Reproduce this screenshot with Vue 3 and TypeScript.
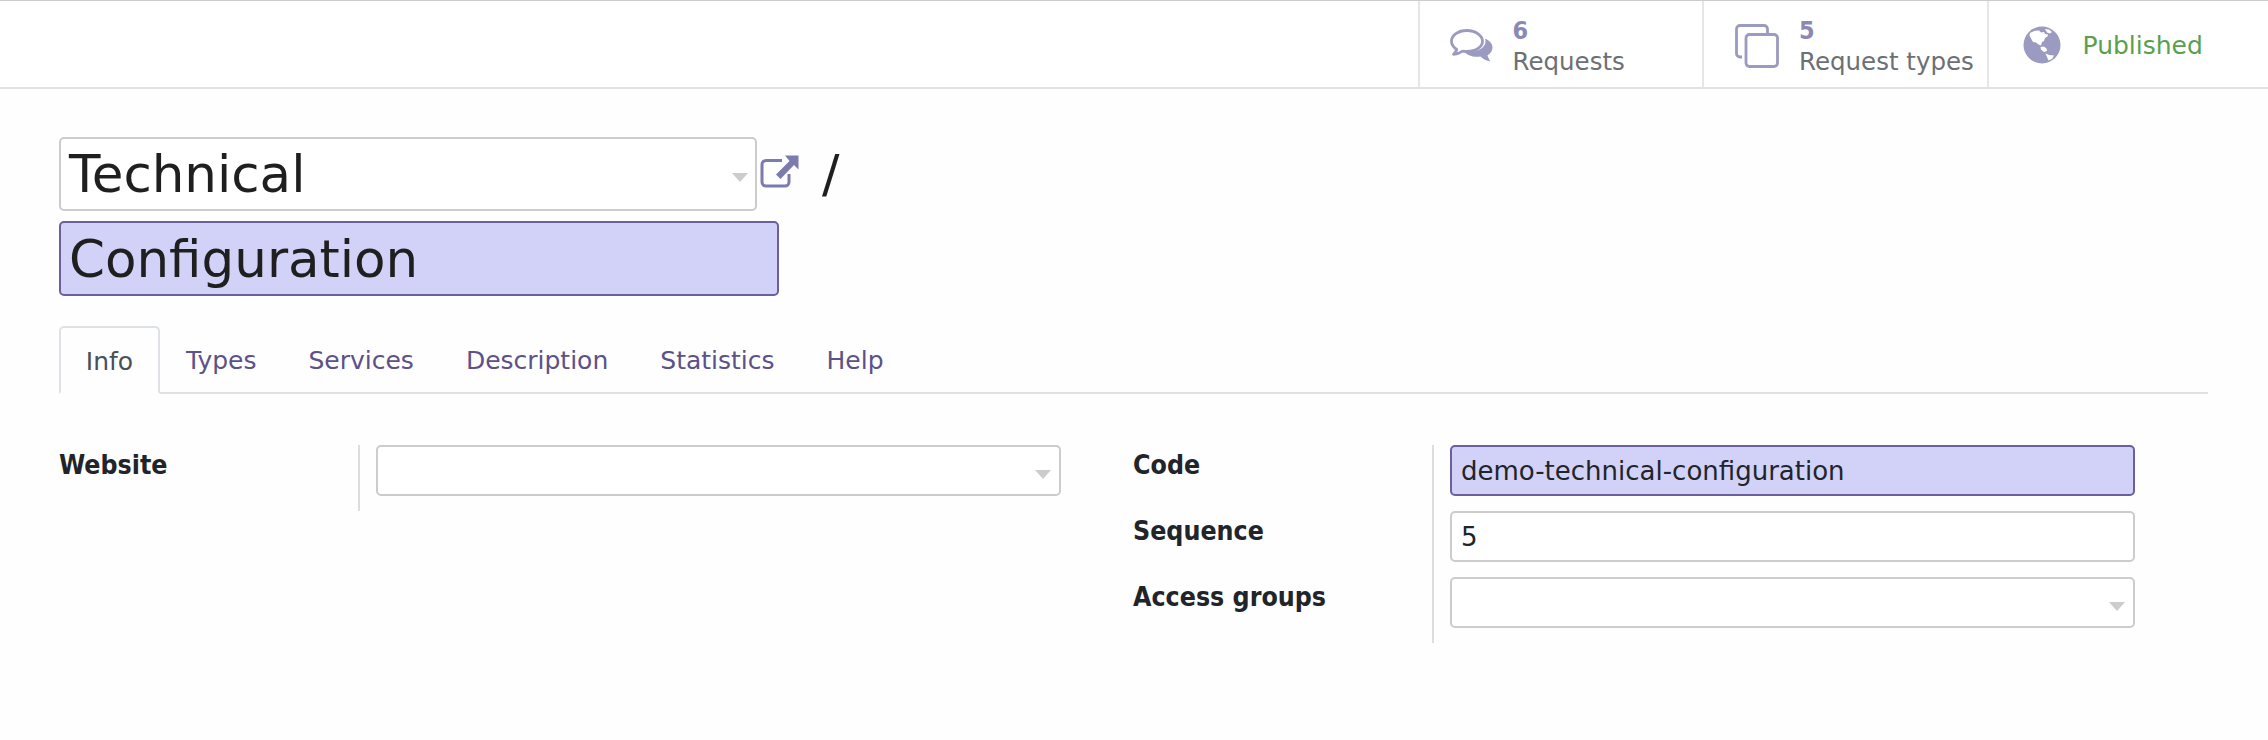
<script setup lang="ts">
interface Stat { value: string; label: string; icon: string }
const stats: Stat[] = [
  { value: '6', label: 'Requests', icon: 'comments' },
  { value: '5', label: 'Request types', icon: 'files' },
]
const tabs: string[] = ['Types', 'Services', 'Description', 'Statistics', 'Help']
</script>

<template>
  <div class="page">
    <div class="buttonbar">
      <div v-for="s in stats" :key="s.label" class="statbtn">
        <svg v-if="s.icon === 'comments'" class="ic-comments" viewBox="0 0 43 34" width="43" height="34">
          <path d="M17 1.500C8 1.500 1.500 6.400 1.500 12.200c0 3.300 2 6.200 5.300 8.200-.5 2-1.500 3.400-3.300 5 3.500-.3 6.500-1.500 9.200-3.300 1.400.2 2.900.3 4.300.3 9 0 15.500-4.700 15.500-10.200S26 1.500 17 1.500z" fill="none" stroke="#9b9ac0" stroke-width="2.800" stroke-linejoin="round"/>
          <path d="M35 9.500c4.500 2 7.500 5 7.500 9 0 3.300-2 6-5 7.800.4 2 1.500 4.200 3 6.200-4-.5-7.500-2.500-10-5-3.500.8-8 .3-12-1.500-2-1-3-1.800-4-3 8 .5 15-1 19-5.500 2-2.300 2.500-5 1.500-8.500z" fill="#9b9ac0"/>
        </svg>
        <svg v-else class="ic-files" viewBox="0 0 44 44" width="44" height="44">
          <path d="M7 33H5a3.500 3.500 0 0 1-3.500-3.500V5A3.500 3.500 0 0 1 5 1.500h24A3.500 3.500 0 0 1 32.500 5v4" fill="none" stroke="#9b9ac0" stroke-width="2.800"/>
          <rect x="11" y="10.500" width="31.500" height="32" rx="3.500" fill="none" stroke="#9b9ac0" stroke-width="2.800"/>
        </svg>
        <div class="stat-text">
          <div class="stat-value">{{ s.value }}</div>
          <div class="stat-label">{{ s.label }}</div>
        </div>
      </div>
      <div class="statbtn last">
        <svg class="ic-globe" viewBox="0 0 38 38" width="38" height="38">
          <circle cx="19" cy="19" r="18.500" fill="#9b9ac0"/>
          <path d="M7 7c3-2 6-2.500 9-2.500l2 2 3-.5 1 2 3 .5-.5 2-2.500 1.500-1 3-2 1-1 3.500-2.500-1-2.500-2-3-.5-2-3.500-1.500-3z" fill="#fff"/>
          <path d="M22 3l4 .5 3 2.500-2 1.500-3-1zM17.500 21l3.500-.5 2.500 2 .5 2.500-3 1-3-2.500z" fill="#fff"/>
          <path d="M22.500 27.500l4 1.500 4.500.5-2 3.500-3.500 1.500-1.500-3.500z" fill="#fff"/>
        </svg>
        <span class="published">Published</span>
      </div>
    </div>

    <div class="sheet">
      <div class="title">
        <div class="title-row">
          <div class="field title-select">
            <span>Technical</span>
            <i class="caret"></i>
          </div>
          <svg class="ic-link" viewBox="0 0 40 33" width="40" height="33">
            <path d="M22 5.500H6a4 4 0 0 0-4 4v17.500a4 4 0 0 0 4 4h19a4 4 0 0 0 4-4v-8" fill="none" stroke="#7c7bad" stroke-width="3"/>
            <path d="M25 .5h13.500v14l-4.500-4.500L20.500 24 16 19.500 29.500 6z" fill="#7c7bad"/>
          </svg>
          <span class="slash">/</span>
        </div>
        <div class="field title-input req"><span>Configuration</span></div>
      </div>

      <div class="tabs">
        <div class="tab active">Info</div>
        <div v-for="t in tabs" :key="t" class="tab">{{ t }}</div>
      </div>

      <div class="groups">
        <div class="group">
          <div class="row">
            <div class="label">Website</div>
            <div class="cell">
              <div class="field input"><i class="caret small"></i></div>
            </div>
          </div>
        </div>
        <div class="group">
          <div class="row">
            <div class="label">Code</div>
            <div class="cell">
              <div class="field input req"><span>demo-technical-configuration</span></div>
            </div>
          </div>
          <div class="row">
            <div class="label">Sequence</div>
            <div class="cell">
              <div class="field input"><span>5</span></div>
            </div>
          </div>
          <div class="row">
            <div class="label">Access groups</div>
            <div class="cell">
              <div class="field input"><i class="caret small"></i></div>
            </div>
          </div>
        </div>
      </div>
    </div>
  </div>
</template>

<style>
html, body { margin: 0; background: #fff; }
</style>

<style scoped>
.page {
  width: 2268px;
  height: 740px;
  background: #fefefe;
  font-family: "DejaVu Sans", sans-serif;
  color: #212529;
  overflow: hidden;
}
.buttonbar {
  height: 86px;
  border-top: 1px solid #ccc;
  border-bottom: 2px solid #e0e2e6;
  display: flex;
  justify-content: flex-end;
  background: #fff;
}
.statbtn {
  width: 284.500px;
  box-sizing: border-box;
  border-left: 2px solid #e6e6e6;
  display: flex;
  align-items: center;
  padding-left: 30px;
  padding-top: 3px;
}
.statbtn:nth-child(2) { padding-left: 31px; }
.statbtn.last { width: 281.500px; padding-left: 34px; padding-top: 2px; }
.stat-text { margin-left: 20px; }
.stat-value {
  font-size: 25px;
  line-height: 31px;
  font-weight: 700;
  font-stretch: condensed;
  color: #8a89b5;
}
.stat-label {
  font-size: 24.500px;
  line-height: 31px;
  color: #6c6f74;
  white-space: nowrap;
}
.published {
  margin-left: 22px;
  font-size: 25px;
  color: #5a9f4f;
}
.sheet { padding: 48px 59px 0; }
.title-row { display: flex; align-items: center; }
.field {
  box-sizing: border-box;
  border: 2px solid #ccc;
  border-radius: 5px;
  display: flex;
  align-items: center;
  position: relative;
  background: #fff;
}
.field.req {
  background: #d2d2f9;
  border-color: #6c5f9d;
}
.title-select {
  width: 698px;
  height: 74px;
  padding-left: 8px;
  font-size: 51.500px;
  color: #1f1f1f;
}
.title-input {
  width: 720px;
  height: 75px;
  margin-top: 10px;
  padding-left: 8px;
  font-size: 51.500px;
  color: #1f1f1f;
}
.caret {
  position: absolute;
  right: 7px;
  top: 34px;
  width: 0;
  height: 0;
  border-left: 8px solid transparent;
  border-right: 8px solid transparent;
  border-top: 9px solid #ccc;
}
.caret.small { top: 23px; right: 8px; border-left-width: 8px; border-right-width: 8px; border-top-width: 9px; }
.ic-link { margin-left: 3px; margin-top: -6px; }
.slash {
  margin-left: 22px;
  font-size: 52px;
  line-height: 60px;
  color: #1f1f1f;
}
.tabs {
  margin-top: 30px;
  height: 66px;
  border-bottom: 2px solid #dee2e6;
  display: flex;
  width: 2149px;
}
.tab {
  height: 66px;
  box-sizing: border-box;
  padding: 17px 26px 0;
  font-size: 25px;
  line-height: 35px;
  color: #5c5189;
  white-space: nowrap;
}
.tab.active {
  width: 101px;
  padding: 16px 0 0;
  text-align: center;
  border: 2px solid #dee2e6;
  border-bottom: 2px solid #fefefe;
  border-radius: 5px 5px 0 0;
  color: #495057;
  height: 68px;
}
.groups {
  margin-top: 51px;
  display: flex;
}
.group { width: 1074px; }
.row {
  display: flex;
  height: 66px;
}
.label {
  width: 299px;
  font-size: 26.500px;
  line-height: 40px;
  font-weight: 700;
  font-stretch: condensed;
  color: #212529;
  white-space: nowrap;
}
.cell {
  border-left: 2px solid #ddd;
  padding-left: 16px;
  height: 66px;
}
.input {
  width: 685px;
  height: 51px;
  padding-left: 9px;
  font-size: 26px;
  color: #212529;
}
</style>
